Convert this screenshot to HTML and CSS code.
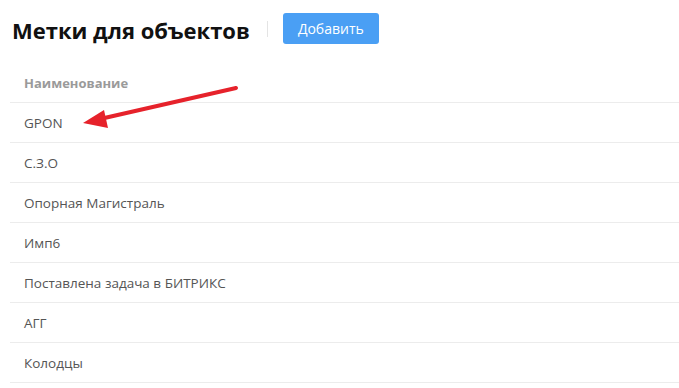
FILE: index.html
```html
<!DOCTYPE html>
<html lang="ru">
<head>
<meta charset="utf-8">
<link rel="stylesheet" href="styles.css">
</head>
<body>
<div class="page">
  <div class="toolbar">
    <h1 class="title">Метки для объектов</h1>
    <span class="sep"></span>
    <button class="btn">Добавить</button>
  </div>
  <div class="table">
    <div class="row head">Наименование</div>
    <div class="row">GPON</div>
    <div class="row">С.З.О</div>
    <div class="row">Опорная Магистраль</div>
    <div class="row">Имп6</div>
    <div class="row">Поставлена задача в БИТРИКС</div>
    <div class="row">АГГ</div>
    <div class="row">Колодцы</div>
  </div>
  <svg class="arrow" width="679" height="388" viewBox="0 0 679 388">
    <line x1="236" y1="88" x2="100" y2="119" stroke="#e6222b" stroke-width="4" stroke-linecap="round"/>
    <polygon points="83,123 104,110 108,128" fill="#e6222b"/>
  </svg>
</div>
</body>
</html>
```
FILE: styles.css
```css
html, body {
  margin: 0;
  padding: 0;
  background: #fff;
}
.page {
  position: relative;
  width: 679px;
  height: 388px;
  overflow: hidden;
  font-family: "Open Sans", "Noto Sans", sans-serif;
}
.toolbar {
  display: flex;
  align-items: center;
  padding: 13px 0 0 12px;
  height: 31px;
  margin-bottom: 19px;
}
.title {
  margin: 0;
  font-size: 22px;
  font-weight: 700;
  color: #111;
  line-height: 31px;
  position: relative;
  top: 2px;
}
.sep {
  width: 1px;
  height: 16px;
  background: #e4e4e4;
  margin: 0 15px 0 17px;
}
.btn {
  border: none;
  background: #4a9ff4;
  color: #fff;
  font-family: inherit;
  font-size: 14px;
  width: 96px;
  height: 31px;
  border-radius: 3px;
  padding: 0;
}
.table {
  margin-left: 10px;
}
.row {
  height: 39px;
  border-bottom: 1px solid #ececec;
  display: flex;
  align-items: center;
  padding-left: 14px;
  font-size: 13.5px;
  color: #555;
}
.row.head {
  font-weight: 700;
  font-size: 13px;
  color: #9a9a9a;
}
.arrow {
  position: absolute;
  left: 0;
  top: 0;
  pointer-events: none;
}
```
